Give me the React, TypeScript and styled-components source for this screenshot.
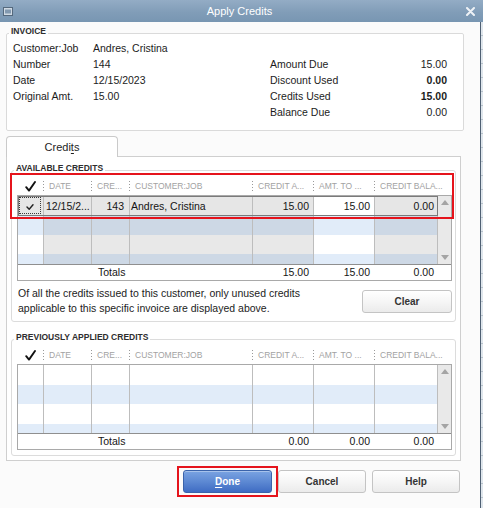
import React from 'react';
import styled, { createGlobalStyle } from 'styled-components';

const GlobalStyle = createGlobalStyle`
  html, body { margin: 0; padding: 0; background: #fbfbfb; }
  body { font-family: "Liberation Sans", Arial, sans-serif; }
  * { box-sizing: border-box; }
`;

const COLS = '26px 48px 38px 123px 61px 61px 63px';

const Dialog = styled.div`
  position: relative;
  width: 483px;
  height: 508px;
  overflow: hidden;
  display: flex;
  flex-direction: column;
  background: #fbfbfb;
  font-family: "Liberation Sans", Arial, sans-serif;
  color: #1c1c1c;
`;

const TitleBar = styled.div`
  height: 22px;
  flex: none;
  display: flex;
  align-items: center;
  padding: 0 8px 0 3px;
  background: linear-gradient(to bottom, #93acc5 0%, #819db8 55%, #7896b2 100%);
`;

const TitleText = styled.div`
  flex: 1;
  text-align: center;
  color: #ffffff;
  font-size: 11px;
  line-height: 22px;
`;

const Body = styled.div`
  flex: 1;
  display: flex;
  min-height: 0;
`;

const Content = styled.div`
  width: 480px;
  flex: none;
  padding: 4px 0 0 6px;
  display: flex;
  flex-direction: column;
`;

const BackStrip = styled.div`
  flex: 1;
  border-left: 1px solid #4f6073;
  background: repeating-linear-gradient(to bottom, #dfe6ec 0, #dfe6ec 13px, #b8c3cd 13px, #b8c3cd 14px);
`;

const InvoiceBox = styled.fieldset`
  margin: 0;
  width: 458px;
  min-width: 0;
  border: 1px solid #dadada;
  border-radius: 2px;
  padding: 0 16px 10px 6px;
  background: #ffffff;
`;

const Legend = styled.legend<{ $shift: number }>`
  padding: 0 2px 4px;
  margin-left: ${p => p.$shift}px;
  font-size: 8.5px;
  line-height: 10px;
  font-weight: bold;
  color: #2e2e2e;
  white-space: nowrap;
`;

const InfoGrid = styled.div`
  display: grid;
  grid-template-columns: 80px 177px 120px 1fr;
  grid-auto-rows: 16px;
  font-size: 10.5px;
  line-height: 16px;
`;

const InfoCell = styled.div<{ $right?: boolean; $bold?: boolean }>`
  text-align: ${p => (p.$right ? 'right' : 'left')};
  font-weight: ${p => (p.$bold ? 'bold' : 'normal')};
  white-space: nowrap;
`;

const TabStrip = styled.div`
  display: flex;
  margin-top: 5px;
  height: 20px;
`;

const Tab = styled.div`
  position: relative;
  z-index: 1;
  width: 112px;
  height: 21px;
  border: 1px solid #cacaca;
  border-bottom: none;
  border-radius: 4px 4px 0 0;
  background: #ffffff;
  display: flex;
  align-items: center;
  justify-content: center;
  font-size: 11px;
  color: #1e1e1e;
  padding-bottom: 1px;
`;

const AccessKey = styled.span`
  text-decoration: underline;
  text-underline-offset: 2px;
`;

const TabPanel = styled.div`
  width: 455px;
  border: 1px solid #cfcfcf;
  background: #ffffff;
  padding: 0 4px 4px;
  display: flex;
  flex-direction: column;
`;

const GroupBox = styled.fieldset<{ $top: number }>`
  margin: ${p => p.$top}px 0 0;
  width: 445px;
  min-width: 0;
  border: 1px solid #dcdcdc;
  border-radius: 3px;
  padding: 0 3px 5px 5px;
`;

const HeaderRow = styled.div`
  display: grid;
  grid-template-columns: 26px 48px 38px 123px 61px 61px 1fr;
  height: 18px;
  align-items: center;
`;

const HeaderCell = styled.div<{ $sep?: boolean }>`
  height: 10px;
  line-height: 10px;
  font-size: 8.5px;
  color: #a2a2a2;
  padding-left: 6px;
  white-space: nowrap;
  overflow: hidden;
  background: ${p =>
    p.$sep ? 'linear-gradient(to bottom, #9a9a9a 1px, transparent 1px) left top / 1px 3px repeat-y' : 'none'};
`;

const HeaderCheck = styled.div`
  height: 12px;
  display: flex;
  align-items: center;
  justify-content: center;
`;

const GridFrame = styled.div`
  border: 1px solid #a9a9a9;
  background: #ffffff;
`;

const GridBody = styled.div`
  display: flex;
  height: 68px;
  overflow: hidden;
`;

const Rows = styled.div`
  width: 420px;
  flex: none;
  display: flex;
  flex-direction: column;
`;

const Row = styled.div<{ $h: number; $sel?: boolean }>`
  flex: none;
  height: ${p => p.$h}px;
  display: grid;
  grid-template-columns: ${COLS};
  outline: ${p => (p.$sel ? '1px solid #7a7a7a' : 'none')};
  outline-offset: -1px;
`;

const Cell = styled.div<{ $bg: string; $align?: 'left' | 'right' | 'center'; $pad?: number }>`
  background: ${p => p.$bg};
  border-right: 1px solid #bdbdbd;
  font-size: 10.5px;
  color: #151515;
  white-space: nowrap;
  overflow: hidden;
  display: flex;
  align-items: center;
  justify-content: ${p => (p.$align === 'right' ? 'flex-end' : p.$align === 'center' ? 'center' : 'flex-start')};
  padding: 0 ${p => (p.$align === 'right' ? p.$pad ?? 4 : 0)}px 0 ${p => (p.$align === 'left' ? p.$pad ?? 2 : 0)}px;
`;

const CheckFocus = styled.div`
  width: 22px;
  height: 17px;
  margin: 0 2px 1px 1px;
  border: 1px dotted #3a3a3a;
  display: flex;
  align-items: flex-end;
  justify-content: center;
  padding-bottom: 3px;
`;

const ScrollBar = styled.div`
  width: 13px;
  flex: none;
  background: #e9e9e9;
  display: flex;
  flex-direction: column;
  justify-content: space-between;
`;

const ScrollArrow = styled.div`
  height: 13px;
  display: flex;
  align-items: center;
  justify-content: center;
`;

const TotalsRow = styled.div`
  display: grid;
  grid-template-columns: ${COLS} 1fr;
  height: 16px;
  border-top: 1px solid #8f8f8f;
  font-size: 10.5px;
  line-height: 15px;
  color: #151515;
`;

const TotalsLabel = styled.div`
  grid-column: 1 / 5;
  padding-left: 80px;
`;

const TotalsValue = styled.div<{ $pad: number }>`
  text-align: right;
  padding-right: ${p => p.$pad}px;
`;

const FooterRow = styled.div`
  display: flex;
  justify-content: space-between;
  align-items: flex-start;
  margin-top: 5px;
  padding-left: 1px;
`;

const Note = styled.div`
  font-size: 10.5px;
  line-height: 15px;
  color: #1c1c1c;
`;

const Button = styled.button<{ $primary?: boolean; $w: number; $top?: number }>`
  width: ${p => p.$w}px;
  height: 23px;
  margin-top: ${p => p.$top ?? 0}px;
  padding: 0;
  border-radius: 3px;
  font-family: "Liberation Sans", Arial, sans-serif;
  font-size: 10px;
  font-weight: bold;
  cursor: pointer;
  color: ${p => (p.$primary ? '#ffffff' : '#343434')};
  border: 1px solid ${p => (p.$primary ? '#3a63ab' : '#c4c4c4')};
  background: ${p =>
    p.$primary
      ? 'linear-gradient(to bottom, #7aa3e2 0%, #5d89d3 50%, #3f6cc3 100%)'
      : 'linear-gradient(to bottom, #ffffff 0%, #f6f6f6 50%, #ebebeb 100%)'};
  box-shadow: ${p => (p.$primary ? 'inset 0 1px 0 rgba(255,255,255,0.35)' : 'inset 0 1px 0 #ffffff')};
`;

const ButtonRow = styled.div`
  width: 454px;
  margin-top: 9px;
  display: flex;
  justify-content: flex-end;
  gap: 6px;
`;

const Highlight = styled.div<{ $x: number; $y: number; $w: number; $h: number }>`
  position: absolute;
  left: ${p => p.$x}px;
  top: ${p => p.$y}px;
  width: ${p => p.$w}px;
  height: ${p => p.$h}px;
  border: 2px solid #e5141c;
  pointer-events: none;
`;

const WindowIcon = () => (
  <svg width="10" height="9" viewBox="0 0 10 9">
    <rect x="0.5" y="0.5" width="9" height="8" fill="#cfd9e3" stroke="#55697d" />
    <rect x="2" y="2.5" width="6" height="4" fill="#8299b0" />
  </svg>
);

const CloseIcon = () => (
  <svg width="9" height="9" viewBox="0 0 9 9">
    <path d="M1 1 L8 8 M8 1 L1 8" stroke="#eef2f6" strokeWidth="2" strokeLinecap="round" />
  </svg>
);

const BigCheck = () => (
  <svg width="11" height="11" viewBox="0 0 11 11">
    <path d="M1.2 6.2 L4 9.6 L10 1" stroke="#111" strokeWidth="1.9" fill="none" strokeLinecap="round" strokeLinejoin="round" />
  </svg>
);

const SmallCheck = () => (
  <svg width="8" height="6" viewBox="0 0 8 6">
    <path d="M1 3 L3.2 5.2 L7 0.8" stroke="#222" strokeWidth="1.4" fill="none" strokeLinecap="round" strokeLinejoin="round" />
  </svg>
);

const UpArrow = () => (
  <svg width="8" height="5" viewBox="0 0 8 5">
    <path d="M0 5 L4 0 L8 5 Z" fill="#a4a4a4" />
  </svg>
);

const DownArrow = () => (
  <svg width="8" height="5" viewBox="0 0 8 5">
    <path d="M0 0 L8 0 L4 5 Z" fill="#a4a4a4" />
  </svg>
);

type Tone = 'sel' | 'selEdit' | 'white' | 'grey' | 'blueLight' | 'blueDark';
const TONES: Record<Tone, string> = {
  sel: '#e6e6e6',
  selEdit: '#ffffff',
  white: '#ffffff',
  grey: '#e8e8e8',
  blueLight: '#e1ecf9',
  blueDark: '#cdd8e5',
};

const HEADERS = ['DATE', 'CRE...', 'CUSTOMER:JOB', 'CREDIT A...', 'AMT. TO ...', 'CREDIT BALA...'];

const GridHeader = () => (
  <HeaderRow>
    <HeaderCheck>
      <BigCheck />
    </HeaderCheck>
    {HEADERS.map(h => (
      <HeaderCell key={h} $sep>
        {h}
      </HeaderCell>
    ))}
  </HeaderRow>
);

const Scroll = () => (
  <ScrollBar>
    <ScrollArrow>
      <UpArrow />
    </ScrollArrow>
    <ScrollArrow>
      <DownArrow />
    </ScrollArrow>
  </ScrollBar>
);

const emptyRow = (key: string, h: number, edit: Tone, ro: Tone) => (
  <Row key={key} $h={h}>
    <Cell $bg={TONES[edit]} />
    <Cell $bg={TONES[ro]} />
    <Cell $bg={TONES[ro]} />
    <Cell $bg={TONES[ro]} />
    <Cell $bg={TONES[ro]} />
    <Cell $bg={TONES[edit]} />
    <Cell $bg={TONES[ro]} />
  </Row>
);

const Totals = ({ a, b, c }: { a: string; b: string; c: string }) => (
  <TotalsRow>
    <TotalsLabel>Totals</TotalsLabel>
    <TotalsValue $pad={5}>{a}</TotalsValue>
    <TotalsValue $pad={5}>{b}</TotalsValue>
    <TotalsValue $pad={4}>{c}</TotalsValue>
  </TotalsRow>
);

export default function App() {
  return (
    <Dialog>
      <GlobalStyle />
      <TitleBar>
        <WindowIcon />
        <TitleText>Apply Credits</TitleText>
        <CloseIcon />
      </TitleBar>
      <Body>
        <Content>
          <InvoiceBox>
            <Legend $shift={-4}>INVOICE</Legend>
            <InfoGrid>
              <InfoCell>Customer:Job</InfoCell>
              <InfoCell>Andres, Cristina</InfoCell>
              <InfoCell />
              <InfoCell />
              <InfoCell>Number</InfoCell>
              <InfoCell>144</InfoCell>
              <InfoCell>Amount Due</InfoCell>
              <InfoCell $right>15.00</InfoCell>
              <InfoCell>Date</InfoCell>
              <InfoCell>12/15/2023</InfoCell>
              <InfoCell>Discount Used</InfoCell>
              <InfoCell $right $bold>
                0.00
              </InfoCell>
              <InfoCell>Original Amt.</InfoCell>
              <InfoCell>15.00</InfoCell>
              <InfoCell>Credits Used</InfoCell>
              <InfoCell $right $bold>
                15.00
              </InfoCell>
              <InfoCell />
              <InfoCell />
              <InfoCell>Balance Due</InfoCell>
              <InfoCell $right>0.00</InfoCell>
            </InfoGrid>
          </InvoiceBox>

          <TabStrip>
            <Tab>
              <span>
                Credi<AccessKey>t</AccessKey>s
              </span>
            </Tab>
          </TabStrip>
          <TabPanel>
            <GroupBox $top={6}>
              <Legend $shift={-3}>AVAILABLE CREDITS</Legend>
              <GridHeader />
              <GridFrame>
                <GridBody>
                  <Rows>
                    <Row $h={20} $sel>
                      <Cell $bg={TONES.sel} $align="left" $pad={0}>
                        <CheckFocus>
                          <SmallCheck />
                        </CheckFocus>
                      </Cell>
                      <Cell $bg={TONES.sel} $align="left" $pad={2}>
                        12/15/2...
                      </Cell>
                      <Cell $bg={TONES.sel} $align="right" $pad={5}>
                        143
                      </Cell>
                      <Cell $bg={TONES.sel} $align="left" $pad={1}>
                        Andres, Cristina
                      </Cell>
                      <Cell $bg={TONES.sel} $align="right" $pad={4}>
                        15.00
                      </Cell>
                      <Cell $bg={TONES.selEdit} $align="right" $pad={4}>
                        15.00
                      </Cell>
                      <Cell $bg={TONES.sel} $align="right" $pad={3}>
                        0.00
                      </Cell>
                    </Row>
                    {emptyRow('a1', 19, 'blueLight', 'blueDark')}
                    {emptyRow('a2', 19, 'white', 'grey')}
                    {emptyRow('a3', 19, 'blueLight', 'blueDark')}
                  </Rows>
                  <Scroll />
                </GridBody>
                <Totals a="15.00" b="15.00" c="0.00" />
              </GridFrame>
              <FooterRow>
                <Note>
                  Of all the credits issued to this customer, only unused credits
                  <br />
                  applicable to this specific invoice are displayed above.
                </Note>
                <Button $w={90} $top={4}>
                  Clear
                </Button>
              </FooterRow>
            </GroupBox>

            <GroupBox $top={10}>
              <Legend $shift={-3}>PREVIOUSLY APPLIED CREDITS</Legend>
              <GridHeader />
              <GridFrame>
                <GridBody>
                  <Rows>
                    {emptyRow('b0', 20, 'white', 'white')}
                    {emptyRow('b1', 19, 'blueLight', 'blueLight')}
                    {emptyRow('b2', 20, 'white', 'white')}
                    {emptyRow('b3', 19, 'blueLight', 'blueLight')}
                  </Rows>
                  <Scroll />
                </GridBody>
                <Totals a="0.00" b="0.00" c="0.00" />
              </GridFrame>
            </GroupBox>
          </TabPanel>

          <ButtonRow>
            <Button $primary $w={89}>
              <AccessKey>D</AccessKey>one
            </Button>
            <Button $w={88}>Cancel</Button>
            <Button $w={88}>Help</Button>
          </ButtonRow>
        </Content>
        <BackStrip />
      </Body>

      <Highlight $x={10} $y={173} $w={444} $h={46} />
      <Highlight $x={177} $y={466} $w={101} $h={31} />
    </Dialog>
  );
}
